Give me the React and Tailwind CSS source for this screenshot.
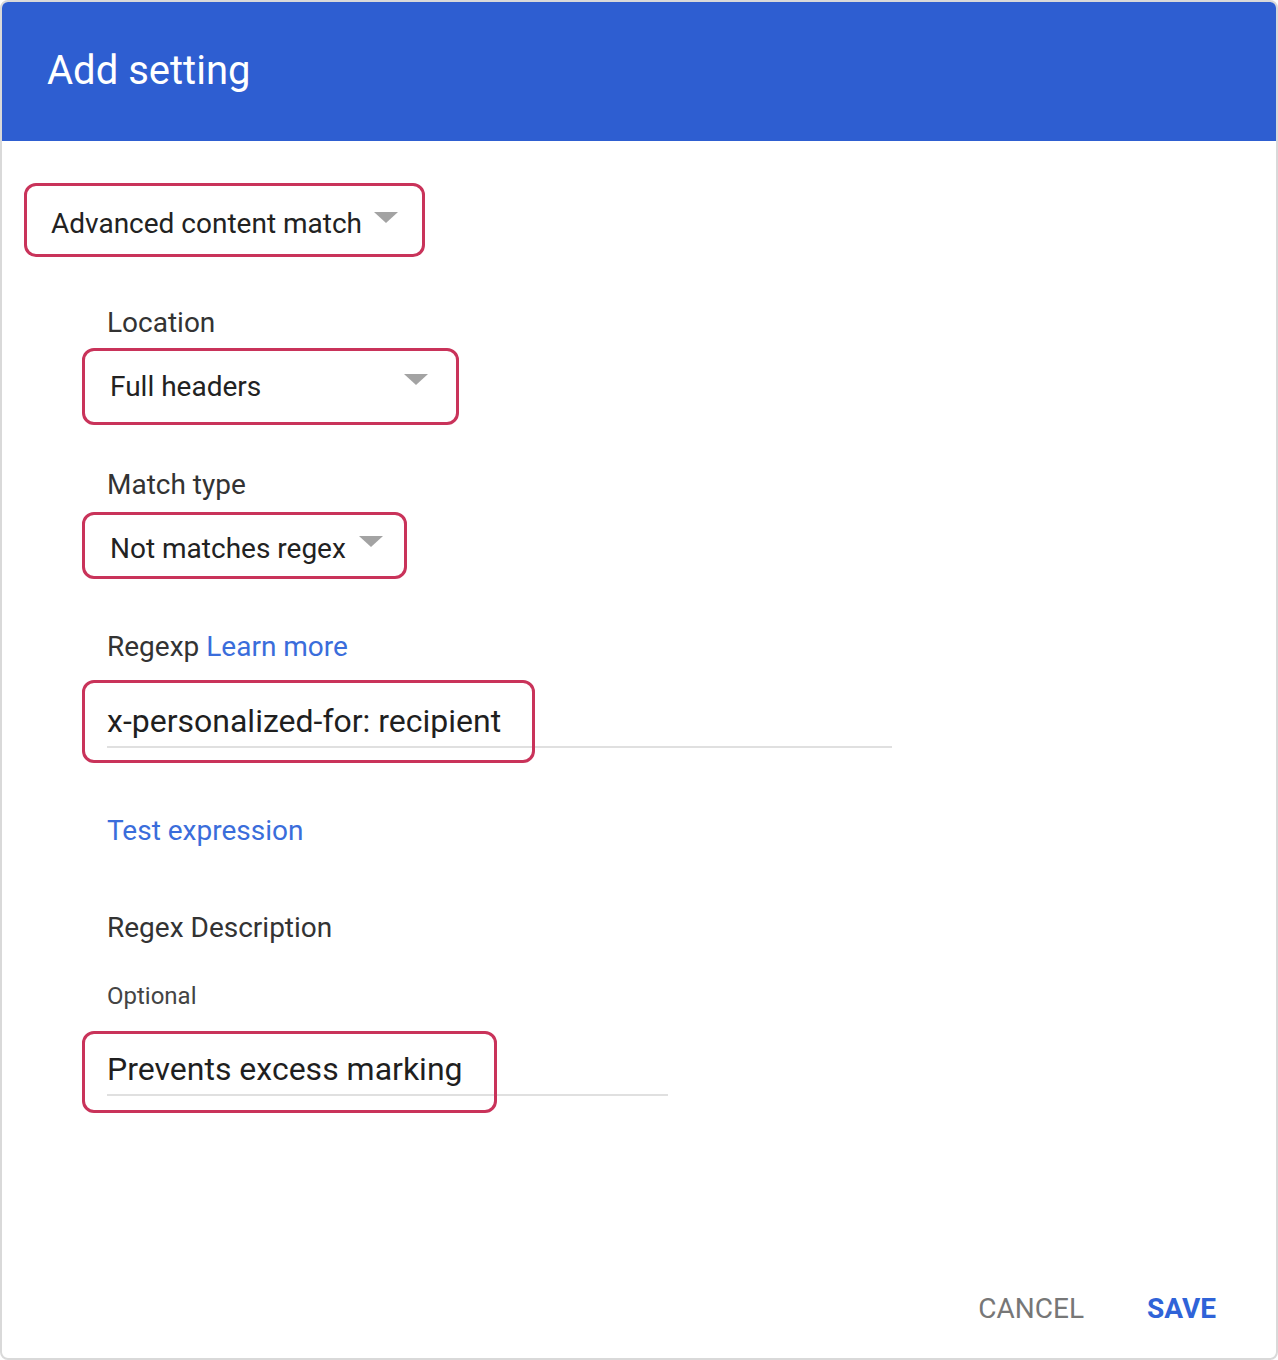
import React from "react";

const font = { fontFamily: "Roboto, 'Noto Sans', sans-serif" };

function Caret({ className }) {
  return (
    <svg className={className} width="24" height="11" viewBox="0 0 24 11">
      <path d="M0 0 L24 0 L12 11 Z" fill="#a3a3a3" />
    </svg>
  );
}

export default function App() {
  return (
    <div
      className="w-[1278px] h-[1360px] bg-white border-2 border-[#d9d9d9] rounded-[8px] overflow-hidden flex flex-col"
      style={font}
    >
      <div className="h-[139px] shrink-0 bg-[#2e5ed1] pl-[45px] pt-[49px]">
        <div className="text-[40px] leading-none text-white">Add setting</div>
      </div>

      <div className="flex-1 flex flex-col">
        <div className="ml-[22px] mt-[42px] w-[401px] h-[74px] border-[3px] border-[#c9335a] rounded-[12px] pl-[24px] pr-[24px] pt-[24px] flex items-start justify-between">
          <span className="text-[28px] leading-none text-[#222222]">Advanced content match</span>
          <Caret className="mt-[2px]" />
        </div>

        <div className="ml-[80px] flex flex-col items-start">
          <div className="mt-[52px] pl-[25px] text-[28px] leading-none text-[#333333]">Location</div>
          <div className="mt-[11px] w-[377px] h-[77px] border-[3px] border-[#c9335a] rounded-[12px] pl-[25px] pr-[28px] pt-[22px] flex items-start justify-between">
            <span className="text-[28px] leading-none text-[#222222]">Full headers</span>
            <Caret className="mt-[1px]" />
          </div>

          <div className="mt-[46px] pl-[25px] text-[28px] leading-none text-[#333333]">Match type</div>
          <div className="mt-[13px] w-[325px] h-[67px] border-[3px] border-[#c9335a] rounded-[12px] pl-[25px] pr-[21px] pt-[20px] flex items-start justify-between">
            <span className="text-[28px] leading-none text-[#222222]">Not matches regex</span>
            <Caret className="mt-[1px]" />
          </div>

          <div className="mt-[54px] pl-[25px] text-[28px] leading-none text-[#333333]">
            Regexp <span className="text-[#3a6ddb]">Learn more</span>
          </div>
          <div className="relative mt-[19px] h-[83px] pl-[25px] pt-[25px]">
            <div className="text-[32px] leading-none text-[#1f1f1f]">x-personalized-for: recipient</div>
            <div className="mt-[9px] w-[785px] h-[2px] bg-[#e0e0e0]" />
            <div className="absolute left-0 top-0 w-[453px] h-[83px] border-[3px] border-[#c9335a] rounded-[12px]" />
          </div>

          <div className="mt-[54px] pl-[25px] text-[28px] leading-none text-[#3a6ddb]">Test expression</div>

          <div className="mt-[69px] pl-[25px] text-[28px] leading-none text-[#333333]">Regex Description</div>
          <div className="mt-[42px] pl-[25px] text-[24px] leading-none text-[#444444]">Optional</div>

          <div className="relative mt-[23px] h-[82px] pl-[25px] pt-[22px]">
            <div className="text-[32px] leading-none text-[#1f1f1f]">Prevents excess marking</div>
            <div className="mt-[9px] w-[561px] h-[2px] bg-[#e0e0e0]" />
            <div className="absolute left-0 top-0 w-[415px] h-[82px] border-[3px] border-[#c9335a] rounded-[12px]" />
          </div>
        </div>

        <div className="mt-auto flex justify-end items-start pr-[60px] pb-[35px] gap-[63px]">
          <span className="text-[28px] leading-none text-[#777777] uppercase">Cancel</span>
          <span className="text-[28px] leading-none text-[#2f63d8] font-bold uppercase">Save</span>
        </div>
      </div>
    </div>
  );
}
